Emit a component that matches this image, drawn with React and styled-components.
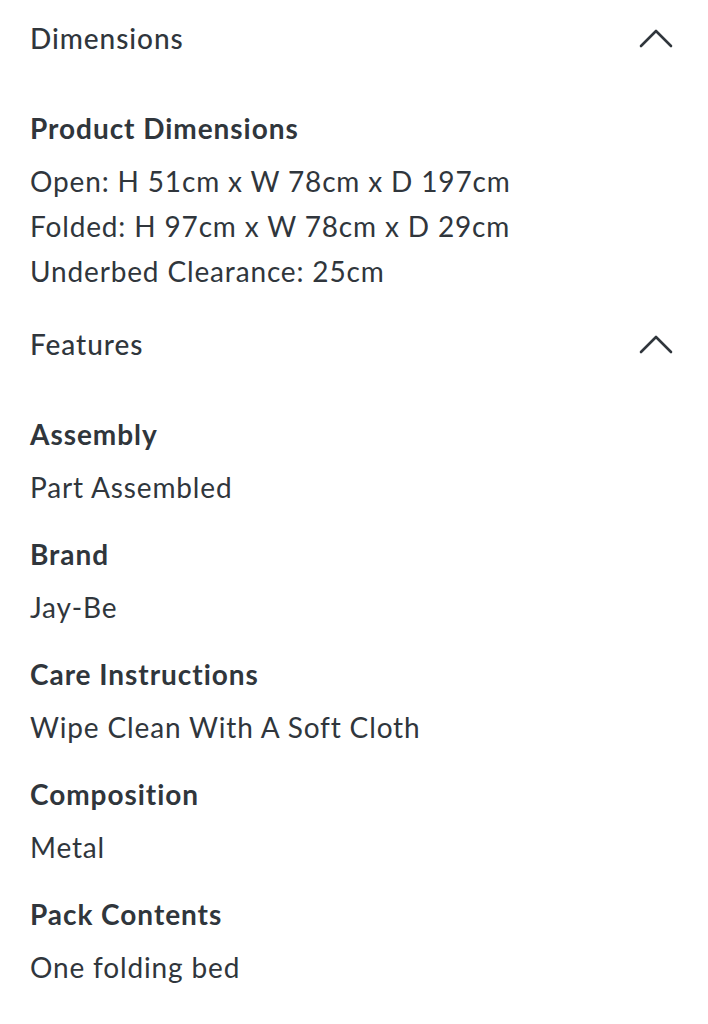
import React from "react";
import styled, { createGlobalStyle } from "styled-components";

const Global = createGlobalStyle`
  html, body { margin: 0; padding: 0; background: #ffffff; }
  body { font-family: "Lato", "Noto Sans", sans-serif; color: #30363c; }
`;

const Page = styled.div`
  width: 708px;
  box-sizing: border-box;
  padding: 0 35px 0 30px;
  display: flex;
  flex-direction: column;
  gap: 12px;
`;

const Section = styled.section`
  display: flex;
  flex-direction: column;
`;

const Header = styled.div`
  height: 76px;
  display: flex;
  align-items: center;
  justify-content: space-between;
`;

const HeaderTitle = styled.h2`
  margin: 0;
  font-size: 28px;
  font-weight: 500;
  letter-spacing: 0.95px;
  line-height: 45px;
`;

const Chevron = styled.svg`
  width: 34px;
  height: 20px;
  display: block;
`;

const Body = styled.div`
  padding-top: 30px;
  display: flex;
  flex-direction: column;
  gap: 22px;
`;

const Item = styled.div`
  display: flex;
  flex-direction: column;
  gap: 8px;
`;

const Label = styled.h3`
  margin: 0;
  font-size: 28px;
  font-weight: 700;
  letter-spacing: 0.95px;
  line-height: 45px;
`;

const Value = styled.p`
  margin: 0;
  font-size: 28px;
  font-weight: 400;
  letter-spacing: 0.85px;
  line-height: 45px;
`;

const Up = () => (
  <Chevron viewBox="0 0 34 20" fill="none">
    <path d="M2 18 L17 3 L32 18" stroke="#30363c" strokeWidth="2.6" strokeLinecap="round" strokeLinejoin="round" />
  </Chevron>
);

const sections = [
  {
    title: "Dimensions",
    items: [
      {
        label: "Product Dimensions",
        values: [
          "Open: H 51cm x W 78cm x D 197cm",
          "Folded: H 97cm x W 78cm x D 29cm",
          "Underbed Clearance: 25cm",
        ],
      },
    ],
  },
  {
    title: "Features",
    items: [
      { label: "Assembly", values: ["Part Assembled"] },
      { label: "Brand", values: ["Jay-Be"] },
      { label: "Care Instructions", values: ["Wipe Clean With A Soft Cloth"] },
      { label: "Composition", values: ["Metal"] },
      { label: "Pack Contents", values: ["One folding bed"] },
    ],
  },
];

export default function App() {
  return (
    <>
      <Global />
      <Page>
        {sections.map((s) => (
          <Section key={s.title}>
            <Header>
              <HeaderTitle>{s.title}</HeaderTitle>
              <Up />
            </Header>
            <Body>
              {s.items.map((it) => (
                <Item key={it.label}>
                  <Label>{it.label}</Label>
                  <div>
                    {it.values.map((v) => (
                      <Value key={v}>{v}</Value>
                    ))}
                  </div>
                </Item>
              ))}
            </Body>
          </Section>
        ))}
      </Page>
    </>
  );
}
